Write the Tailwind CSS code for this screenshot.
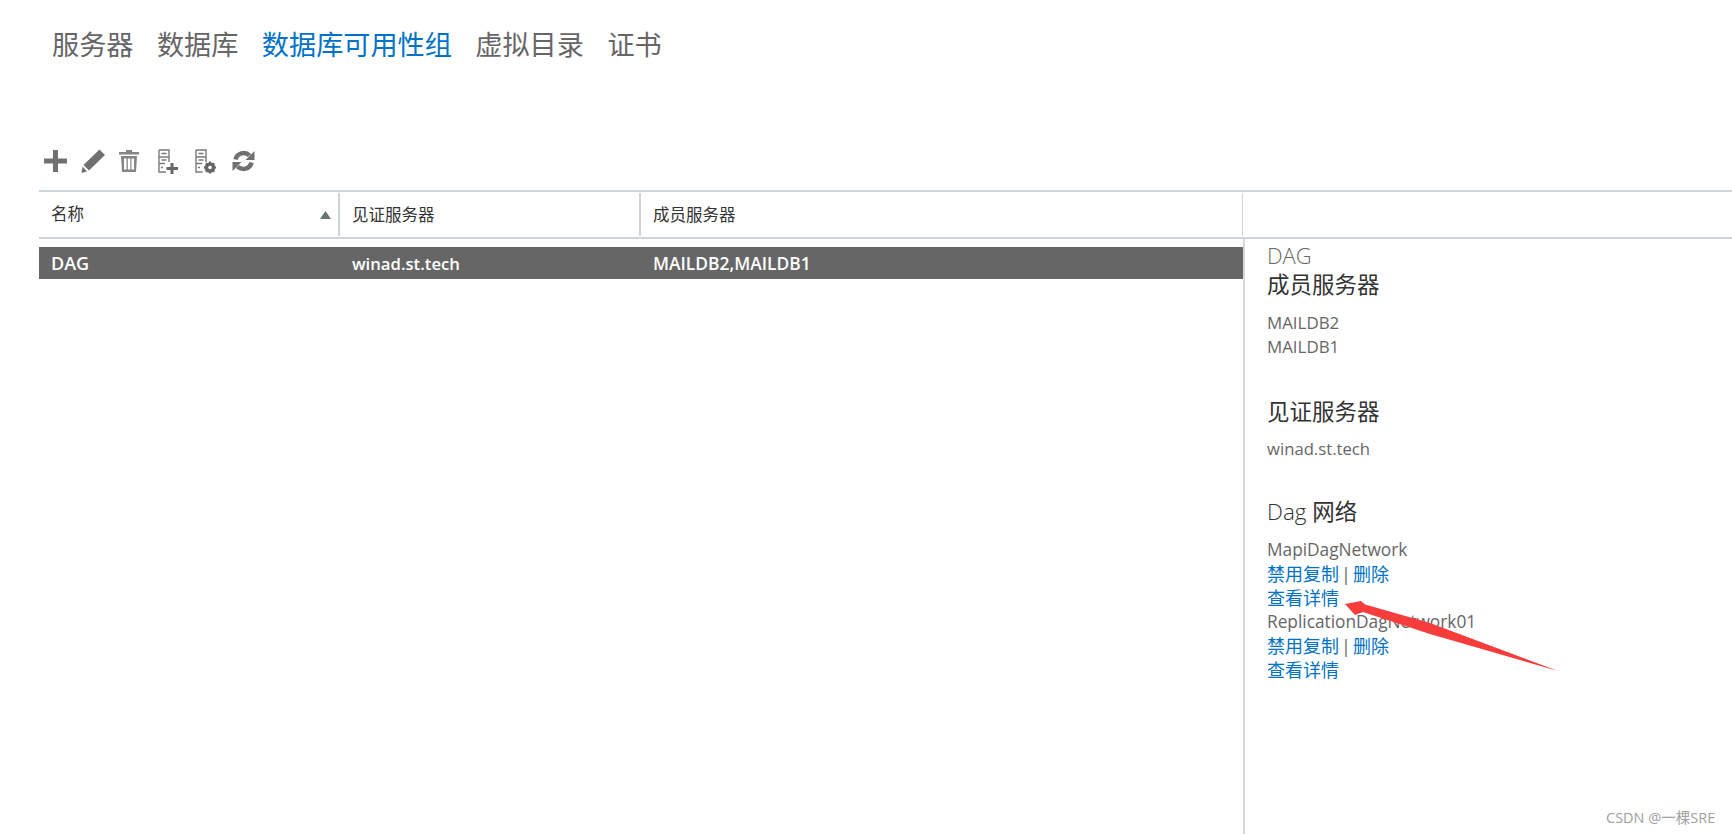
<!DOCTYPE html>
<html lang="zh-CN">
<head>
<meta charset="utf-8">
<script src="https://cdn.jsdelivr.net/npm/@tailwindcss/browser@4"></script>
<title>数据库可用性组</title>
</head>
<body class="bg-white overflow-hidden font-['Open_Sans','Noto_Sans_CJK_SC',sans-serif]">
<div class="relative w-[1732px] h-[834px] overflow-hidden">
  <nav class="flex gap-[23.500px] pl-[52px] pt-[27px] h-[148px] text-[27.150px] leading-[36px] text-[#666666]">
    <a>服务器</a><a>数据库</a><a class="text-[#0072c6]">数据库可用性组</a><a>虚拟目录</a><a>证书</a>
  </nav>
  <div class="flex items-center pl-[44px] h-[26px] text-[#707070]">
    <svg class="w-[23px] h-[24px]" viewBox="0 0 23 24" fill="currentColor"><path d="M9 1h5v8.500h9v5h-9V23H9v-8.500H0v-5h9z"/></svg>
    <svg class="w-[24px] h-[24px] ml-[14px]" viewBox="0 0 24 24" fill="currentColor"><path d="M18.500 0.500L24 6 8 21.500 2.500 16zM1.500 17.500L6 22.500 0.500 24z"/></svg>
    <svg class="w-[20px] h-[24px] ml-[14px] text-[#858585]" viewBox="0 0 20 24" fill="currentColor"><path fill-rule="evenodd" d="M7 1h6v2h7v2.500H0V3h7zM2 7h16l-1 16H3zM5 9.500v11h2.500v-11zM8.800 9.500v11h2.500v-11zM12.500 9.500v11H15v-11z"/></svg>
    <svg class="w-[21px] h-[25px] ml-[19px]" viewBox="0 0 21 25" fill="none" stroke="#7a7a7a" stroke-width="1.400"><path d="M1 1h10v12M1 1v22h7M1 8h10M1 14.500h6M3.500 4.500h5M3.500 11h5M3 18.500h2"/><path d="M14 14v11M8.500 19.500H20" stroke="#666666" stroke-width="3"/></svg>
    <svg class="w-[23px] h-[25px] ml-[16px]" viewBox="0 0 23 25" fill="none" stroke="#7a7a7a" stroke-width="1.400"><path d="M1 1h10v12M1 1v22h6.500M1 8h10M1 14.500h6M3.500 4.500h5M3.500 11h5M3 18.500h2"/><circle cx="15" cy="18.500" r="3.800" stroke="#666666" stroke-width="3"/><path d="M15 12.500v12M9 18.500h12M10.800 14.300l8.400 8.400M19.200 14.300l-8.400 8.400" stroke="#666666" stroke-width="2"/><circle cx="15" cy="18.500" r="1.800" fill="#ffffff" stroke="none"/></svg>
    <svg class="w-[23px] h-[24px] ml-[14px]" viewBox="0 0 23 24"><path d="M3.500 10.500A8.300 8.300 0 0 1 17.500 6.500M19.500 13.500A8.300 8.300 0 0 1 5.500 17.500" fill="none" stroke="currentColor" stroke-width="4.600"/><path d="M22.500 2v9h-9zM0.500 22v-9h9z" fill="currentColor"/></svg>
  </div>
  <div class="ml-[39px] mt-[16px] h-[49px] flex items-center border-y-2 border-[#ced4d8] text-[16.500px] text-[#333333]">
    <div class="relative w-[299px] pl-[12px]">名称
      <svg class="absolute right-[7px] top-[9px] w-[11px] h-[8px]" viewBox="0 0 11 8" fill="#6b7570"><path d="M5.500 0L11 8H0z"/></svg>
    </div>
    <div class="w-[301px] h-[43px] leading-[43px] border-l-2 border-[#ced4d8] pl-[12px]">见证服务器</div>
    <div class="w-[603px] h-[43px] leading-[43px] border-l-2 border-[#ced4d8] pl-[12px]">成员服务器</div>
    <div class="h-[43px] border-l border-[#ced4d8]"></div>
  </div>
  <div class="flex h-[595px]">
    <div class="w-[1204px] ml-[39px] pt-[8px]">
      <div class="flex items-center h-[32px] pt-[1px] bg-[#666666] text-white font-semibold">
        <div class="w-[302px] pl-[12px] text-[18px]">DAG</div>
        <div class="w-[301px] pl-[11px] text-[16.700px]">winad.st.tech</div>
        <div class="pl-[11px] text-[17.400px]">MAILDB2,MAILDB1</div>
      </div>
    </div>
    <aside class="flex-1 border-l-2 border-[#d4d8da] pl-[22px] text-[16.900px] leading-[24px] text-[#666666]">
      <div class="text-[22px] leading-[30px] font-light pt-[1px]">DAG</div>
      <h2 class="text-[22.500px] leading-[30px] text-[#333333]">成员服务器</h2>
      <div class="mt-[11px]">MAILDB2</div>
      <div>MAILDB1</div>
      <h2 class="mt-[38px] text-[22.500px] leading-[30px] text-[#333333]">见证服务器</h2>
      <div class="mt-[10px] text-[16.700px]">winad.st.tech</div>
      <h2 class="mt-[36px] text-[22.500px] leading-[30px] text-[#333333]"><span class="font-light">Dag</span> 网络</h2>
      <div class="mt-[11px] text-[17.300px]">MapiDagNetwork</div>
      <div class="text-[#0072c6] text-[18px]">禁用复制<span class="inline-block w-[14px] text-center text-[#666666]">|</span>删除</div>
      <div class="text-[#0072c6] text-[18px]">查看详情</div>
      <div class="text-[17.300px]">ReplicationDagNetwork01</div>
      <div class="text-[#0072c6] text-[18px]">禁用复制<span class="inline-block w-[14px] text-center text-[#666666]">|</span>删除</div>
      <div class="text-[#0072c6] text-[18px]">查看详情</div>
    </aside>
  </div>
  <svg class="absolute left-0 top-0 w-[1732px] h-[834px] pointer-events-none" viewBox="0 0 1732 834"><path d="M1345 604L1361 601 1365 604.500 1430 623 1558 671 1430 634 1363 612 1355 615z" fill="#f73c3c"/></svg>
  <div class="absolute left-[1606px] top-[809px] text-[14.500px] leading-[18px] text-[#a0a0a0]">CSDN @一棵SRE</div>
</div>
</body>
</html>
